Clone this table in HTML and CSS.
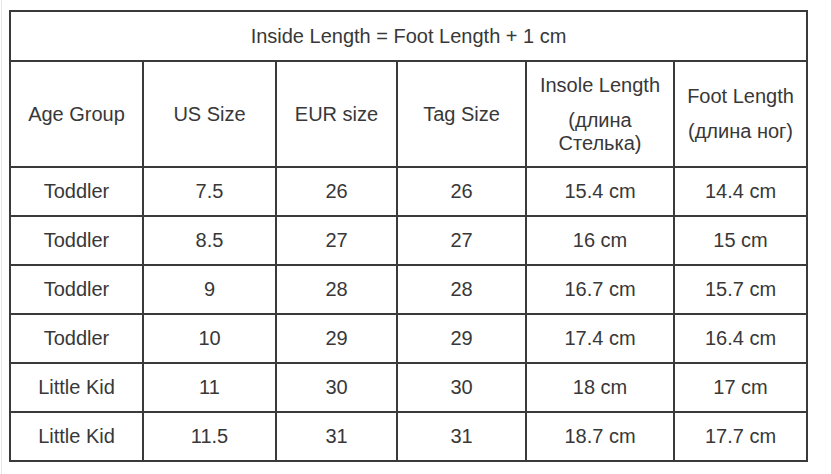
FILE: index.html
```html
<!DOCTYPE html>
<html>
<head>
<meta charset="utf-8">
<link rel="stylesheet" href="styles.css">
</head>
<body>
<div class="page">
<table class="size-table">
  <colgroup>
    <col class="c1"><col class="c2"><col class="c3"><col class="c4"><col class="c5"><col class="c6">
  </colgroup>
  <tr class="title-row"><td colspan="6">Inside Length = Foot Length + 1 cm</td></tr>
  <tr class="head-row">
    <td>Age Group</td>
    <td>US Size</td>
    <td>EUR size</td>
    <td>Tag Size</td>
    <td><div class="p">Insole Length</div><div class="p gap">(длина Стелька)</div></td>
    <td><div class="p">Foot Length</div><div class="p gap">(длина ног)</div></td>
  </tr>
  <tr><td>Toddler</td><td>7.5</td><td>26</td><td>26</td><td>15.4 cm</td><td>14.4 cm</td></tr>
  <tr><td>Toddler</td><td>8.5</td><td>27</td><td>27</td><td>16 cm</td><td>15 cm</td></tr>
  <tr><td>Toddler</td><td>9</td><td>28</td><td>28</td><td>16.7 cm</td><td>15.7 cm</td></tr>
  <tr><td>Toddler</td><td>10</td><td>29</td><td>29</td><td>17.4 cm</td><td>16.4 cm</td></tr>
  <tr><td>Little Kid</td><td>11</td><td>30</td><td>30</td><td>18 cm</td><td>17 cm</td></tr>
  <tr><td>Little Kid</td><td>11.5</td><td>31</td><td>31</td><td>18.7 cm</td><td>17.7 cm</td></tr>
</table>
</div>
</body>
</html>
```
FILE: styles.css
```css
html, body {
  margin: 0;
  padding: 0;
  background: #fff;
}
.page {
  box-sizing: border-box;
  width: 831px;
  height: 474px;
  padding: 10px 0 0 7px;
  border-left: 1px solid #e6e6e6;
  margin-left: 1px;
  font-family: "Liberation Sans", Arial, sans-serif;
  color: #383838;
}
.size-table {
  border-collapse: collapse;
  table-layout: fixed;
  width: 797px;
  font-size: 20px;
}
.c1 { width: 133px; }
.c2 { width: 133px; }
.c3 { width: 121px; }
.c4 { width: 129px; }
.c5 { width: 148px; }
.c6 { width: 133px; }
.size-table td {
  border: 2px solid #3a3a3a;
  text-align: center;
  vertical-align: middle;
  padding: 0 8px;
  height: 47px;
  line-height: 23px;
}
.title-row td { height: 48px; }
.head-row td { height: 104px; }
.p.gap { margin-top: 12px; }
```
